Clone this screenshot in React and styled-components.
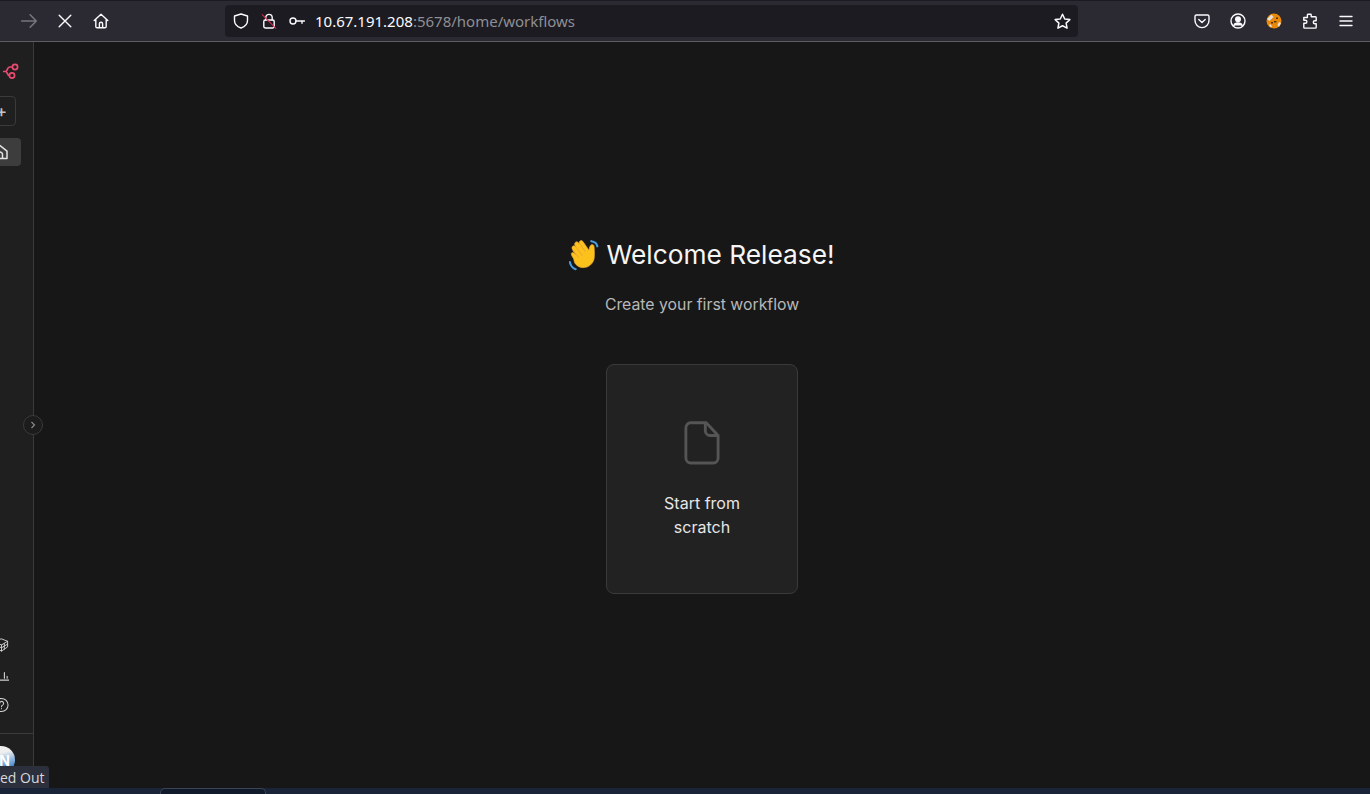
import React from 'react';
import styled, { createGlobalStyle } from 'styled-components';

const GlobalStyle = createGlobalStyle`
  html, body {
    margin: 0;
    padding: 0;
    height: 100%;
    background: #171717;
    overflow: hidden;
    font-family: Inter, "Liberation Sans", sans-serif;
  }
  #root {
    height: 100%;
  }
`;

const Icon = ({ size = 16, color = '#fbfbfe', width = 1.4, vb = 16, children }) => (
  <svg width={size} height={size} viewBox={`0 0 ${vb} ${vb}`} fill="none" stroke={color} strokeWidth={width} strokeLinecap="round" strokeLinejoin="round">
    {children}
  </svg>
);

const App = () => {
  return (
    <Page>
      <GlobalStyle />
      <Toolbar>
        <NavGroup>
          <NavButton>
            <Icon size={18} color="#77767c"><path d="M1.5 8h13M9 2.5 14.5 8 9 13.5" /></Icon>
          </NavButton>
          <NavButton>
            <Icon size={16}><path d="M2.2 2.2l11.6 11.6M13.8 2.2 2.2 13.8" /></Icon>
          </NavButton>
          <NavButton>
            <Icon size={16}><path d="M1.2 7.6 8 1.3l6.8 6.3M2.8 6.4v7a1.3 1.3 0 0 0 1.3 1.3h7.8a1.3 1.3 0 0 0 1.3-1.3v-7M6.4 14.6v-3.8a1.6 1.6 0 0 1 3.2 0v3.8" /></Icon>
          </NavButton>
        </NavGroup>

        <UrlBar>
          <UrlIcons>
            <Icon size={16}><path d="M8 1 14.5 3v4.5c0 3.6-2.6 6.2-6.5 7.5-3.9-1.3-6.5-3.9-6.5-7.5V3z" /></Icon>
            <LockBox>
              <Icon size={16}>
                <path d="M4.8 7V4.6a3.2 3.2 0 0 1 6.4 0V7" />
                <rect x="2.8" y="7" width="10.4" height="8" rx="1.4" />
              </Icon>
              <LockSlash />
            </LockBox>
            <Icon size={16}><circle cx="4" cy="8" r="3" /><path d="M7 8h8.5M13 8v2.2" /></Icon>
          </UrlIcons>
          <UrlText>
            <strong>10.67.191.208</strong>:5678/home/workflows
          </UrlText>
          <StarButton>
            <Icon size={17}><path d="m8 1.2 2.1 4.4 4.8.6-3.5 3.3.9 4.8L8 12l-4.3 2.3.9-4.8L1.1 6.2l4.8-.6z" /></Icon>
          </StarButton>
        </UrlBar>

        <ActionGroup>
          <ActionButton>
            <Icon size={16}><path d="M2.4 2h11.2A1.4 1.4 0 0 1 15 3.4v4.2a7 7 0 0 1-14 0V3.4A1.4 1.4 0 0 1 2.4 2zM4.8 6.4 8 9.4l3.2-3" /></Icon>
          </ActionButton>
          <ActionButton>
            <Icon size={16}>
              <circle cx="8" cy="8" r="7" />
              <circle cx="8" cy="6.2" r="2.3" fill="#fbfbfe" />
              <path d="M3.8 12.6c.6-2 2.2-2.6 4.2-2.6s3.6.6 4.2 2.6" fill="#fbfbfe" />
            </Icon>
          </ActionButton>
          <ActionButton>
            <svg width="16" height="16" viewBox="0 0 16 16">
              <circle cx="8" cy="8" r="7.5" fill="#e8890c" />
              <path d="M1 6 5.500 1.500 7.500 4 3.500 8zM13 14l2-4-2-1-1.500 3zM3 12l2 2.500 1-1.500-2-2z" fill="#e6e1d8" />
              <path d="M5 9h2v1.600H5zM8 8h2.400v1.400H8zM10 4.500h2V6h-2z" fill="#5a3208" />
            </svg>
          </ActionButton>
          <ActionButton>
            <Icon size={16}><path d="M6 1.2h2.6a.6.6 0 0 1 .6.6v1.900h4.200a.8.8 0 0 1 .8.8v3.200h-1.400a1.500 1.500 0 0 0 0 3h1.400v3.600a.8.8 0 0 1-.8.8H2.600a.8.8 0 0 1-.8-.8v-4h1.600a1.500 1.500 0 0 0 0-3H1.800V4.500h3.600V2c0-.4.2-.8.6-.8z" /></Icon>
          </ActionButton>
          <ActionButton>
            <Icon size={16}><path d="M2 3.500h12M2 8h12M2 12.500h12" /></Icon>
          </ActionButton>
        </ActionGroup>
      </Toolbar>

      <Body>
        <Sidebar>
          <SideTop>
            <LogoSlot>
              <svg width="20" height="18" viewBox="0 0 20 18" fill="none" stroke="#ea4b71" strokeWidth="1.700">
                <circle cx="12" cy="4" r="2.600" />
                <circle cx="9" cy="12.500" r="2.600" />
                <path d="M0 8.500h2.500c2.200 0 1.500-4.500 4-4.500h2.900M2.500 8.500c2 0 1.500 4 4 4" />
              </svg>
            </LogoSlot>
            <AddButton>
              <PlusSign>+</PlusSign>
            </AddButton>
            <HomeItem>
              <Icon size={16} color="#e4e4e4" width={1.5}><path d="M1 7.200 8 1.500l7 5.700v7.300H1zM5.500 14.500v-4a2.500 2.500 0 0 1 5 0v4" /></Icon>
            </HomeItem>
          </SideTop>

          <SideBottom>
            <SideLink>
              <Icon size={18} color="#d0d0d0" width={1}><path d="M8 1.500 14.500 4v6L8 14.500 1.500 11V5zM1.500 5 8 8l6.500-4M8 8v6.500M4 6.500v6M11 6.500v6M1.500 8 8 11l6.500-4" /></Icon>
            </SideLink>
            <SideLink>
              <Icon size={18} color="#d0d0d0" width={1.200}><path d="M0 13.500h16M11.100 11.500V5.500M14 11.500V9.500" /></Icon>
            </SideLink>
            <SideLink>
              <Icon size={18} color="#d0d0d0" width={1.100}><circle cx="8" cy="8" r="7" /><path d="M6 6.300a2.100 2.100 0 1 1 3.100 1.800c-.8.400-1.100.9-1.100 1.700M8 11.800v.2" /></Icon>
            </SideLink>
            <UserRow>
              <Avatar>N</Avatar>
            </UserRow>
          </SideBottom>

          <CollapseButton>
            <svg width="6" height="8" viewBox="0 0 6 8" fill="none" stroke="#8d8d8d" strokeWidth="1.100"><path d="m1.500 1 3 3-3 3" /></svg>
          </CollapseButton>
        </Sidebar>

        <Main>
          <Heading>
            <svg width="31" height="31" viewBox="2.500 1.500 24.500 26">
              <path d="M20.500 2.500c2.500.3 4.500 2 5 4.300M2.500 20c.4 2.700 2.200 5 4.800 6" fill="none" stroke="#4a9ce0" strokeWidth="1.800" strokeLinecap="round" />
              <path d="M5.500 17c-1.600-2.300-2.400-4-1.400-4.800 1-.8 2.200.2 3.500 1.800L4.800 9.800c-.9-1.300-.8-2.600.2-3.200 1-.6 2 0 2.900 1.200L6.900 6.300c-.7-1.200-.6-2.400.4-3 1-.6 2.100 0 2.900 1.200l.200.300c-.4-1.100-.1-2.100.8-2.600 1-.5 2 .1 2.700 1.200l4.600 6.800c.4-2 .4-4 2-4.700 1.200-.5 2.200.3 2.300 1.500.3 3 .4 6.500.2 9-.3 4-3 7.400-7 8.400-4 1-7.500-.7-9.500-3.700z" fill="#fcc21b" stroke="#e8a33c" strokeWidth=".5" />
              <path d="M11 4.800l4.500 6.500M8 7.800l5 7M5 10l5 6.500" fill="none" stroke="#e8a33c" strokeWidth=".8" />
            </svg>
            <HeadingText>Welcome Release!</HeadingText>
          </Heading>
          <SubHeading>Create your first workflow</SubHeading>
          <StartCard>
            <svg width="36" height="44" viewBox="0 0 38 44" preserveAspectRatio="none" fill="none" stroke="#555" strokeWidth="3" strokeLinejoin="round">
              <path d="M7 1.800h16.500L36 14.500V37a5 5 0 0 1-5 5H7a5 5 0 0 1-5-5V6.800a5 5 0 0 1 5-5z" />
              <path d="M22.500 2v7.500a5 5 0 0 0 5 5H36" />
            </svg>
            <CardLabel>Start from scratch</CardLabel>
          </StartCard>
        </Main>

        <Tooltip>ed Out</Tooltip>
      </Body>

      <TaskStrip>
        <TaskTab />
      </TaskStrip>
    </Page>
  );
};

export default App;

const Page = styled.div`
  display: flex;
  flex-direction: column;
  height: 794px;
  width: 1370px;
  overflow: hidden;
`;

const Toolbar = styled.header`
  flex: none;
  display: flex;
  align-items: center;
  box-sizing: border-box;
  height: 42px;
  background: #2b2a33;
  border-top: 1px solid #1c1b22;
  border-bottom: 1px solid #5c5c61;
`;

const NavGroup = styled.div`
  display: flex;
  align-items: center;
  margin-left: 11px;
  width: 214px;
`;

const NavButton = styled.div`
  display: flex;
  align-items: center;
  justify-content: center;
  width: 36px;
  height: 32px;
`;

const UrlBar = styled.div`
  display: flex;
  align-items: center;
  box-sizing: border-box;
  width: 853px;
  height: 32px;
  padding: 0 4px 0 8px;
  background: #1c1b22;
  border-radius: 4px;
`;

const UrlIcons = styled.div`
  display: flex;
  align-items: center;
  gap: 12px;
`;

const LockBox = styled.div`
  position: relative;
  width: 16px;
  height: 16px;
`;

const LockSlash = styled.span`
  position: absolute;
  left: -2px;
  top: 8px;
  width: 20px;
  height: 1px;
  background: #e22850;
  transform: rotate(45deg);
`;

const UrlText = styled.div`
  flex: 1;
  margin-left: 10px;
  font-family: "Noto Sans", sans-serif;
  font-size: 15px;
  color: #8f8f93;
  white-space: nowrap;

  strong {
    font-weight: 400;
    color: #fbfbfe;
  }
`;

const StarButton = styled.div`
  display: flex;
  align-items: center;
  justify-content: center;
  width: 24px;
`;

const ActionGroup = styled.div`
  display: flex;
  align-items: center;
  margin-left: 106px;
`;

const ActionButton = styled.div`
  display: flex;
  align-items: center;
  justify-content: center;
  width: 36px;
  height: 32px;
`;

const Body = styled.div`
  position: relative;
  flex: 1;
  display: flex;
  min-height: 0;
  background: #171717;
`;

const Sidebar = styled.aside`
  position: relative;
  flex: none;
  display: flex;
  flex-direction: column;
  justify-content: space-between;
  box-sizing: border-box;
  width: 34px;
  background: #1f1f1f;
  border-right: 1px solid #3a3a3a;
`;

const SideTop = styled.div`
  display: flex;
  flex-direction: column;
  overflow: hidden;
`;

const LogoSlot = styled.div`
  display: flex;
  margin-top: 21px;
  margin-left: 3px;
  height: 17px;
`;

const AddButton = styled.div`
  display: flex;
  align-items: center;
  justify-content: flex-end;
  box-sizing: border-box;
  width: 40px;
  height: 30px;
  margin: 16px 0 0 -24px;
  padding-right: 8px;
  border: 1px solid #3a3a3a;
  border-radius: 4px;
`;

const PlusSign = styled.span`
  font-size: 17px;
  line-height: 1;
  color: #c4c4c4;
  font-weight: 500;
`;

const HomeItem = styled.div`
  display: flex;
  align-items: center;
  justify-content: flex-end;
  width: 45px;
  height: 28px;
  margin: 12px 0 0 -24px;
  padding-right: 13px;
  box-sizing: border-box;
  background: #3d3d3d;
  border-radius: 4px;
`;

const SideBottom = styled.div`
  display: flex;
  flex-direction: column;
  overflow: hidden;
`;

const SideLink = styled.div`
  display: flex;
  justify-content: flex-end;
  align-items: center;
  height: 30px;
  margin-left: -6px;
  padding-right: 24px;
`;

const UserRow = styled.div`
  display: flex;
  justify-content: flex-end;
  box-sizing: border-box;
  height: 55px;
  margin-top: 13px;
  padding: 12px 18px 0 0;
  border-top: 1px solid #3a3a3a;
`;

const Avatar = styled.div`
  flex: none;
  display: flex;
  align-items: center;
  justify-content: flex-end;
  box-sizing: border-box;
  width: 28px;
  height: 28px;
  padding: 0 5px 0 0;
  border-radius: 50%;
  background: linear-gradient(165deg, #efefef 30%, #3b82c9 80%);
  color: #fff;
  font-size: 14px;
  font-weight: 700;
`;

const CollapseButton = styled.div`
  position: absolute;
  top: 373px;
  left: 23px;
  display: flex;
  align-items: center;
  justify-content: center;
  box-sizing: border-box;
  width: 20px;
  height: 20px;
  background: #1c1c1c;
  border: 1px solid #3a3a3a;
  border-radius: 50%;
`;

const Main = styled.main`
  flex: 1;
  display: flex;
  flex-direction: column;
  align-items: center;
  padding-top: 195px;
`;

const Heading = styled.div`
  display: flex;
  align-items: center;
  gap: 6px;
  height: 36px;
`;

const HeadingText = styled.h1`
  margin: 0;
  font-size: 26.300px;
  font-weight: 400;
  line-height: 36px;
  color: #f5f5f5;
`;

const SubHeading = styled.p`
  margin: 22px 0 0;
  font-size: 15.800px;
  line-height: 20px;
  color: #b8b8b8;
`;

const StartCard = styled.button`
  display: flex;
  flex-direction: column;
  align-items: center;
  box-sizing: border-box;
  width: 192px;
  height: 230px;
  margin-top: 49px;
  padding: 56px 50px 0;
  background: #222222;
  border: 1px solid #3a3a3a;
  border-radius: 8px;
  font-family: inherit;
`;

const CardLabel = styled.span`
  margin-top: 26px;
  font-size: 16px;
  line-height: 24px;
  color: #e6e6e6;
  text-align: center;
`;

const Tooltip = styled.div`
  position: absolute;
  left: -4px;
  bottom: 0;
  box-sizing: border-box;
  height: 22px;
  padding: 1px 4px 0 4px;
  background: #2c2f3c;
  border-radius: 3px 3px 0 0;
  font-family: "Open Sans", "Noto Sans", sans-serif;
  font-size: 14px;
  line-height: 22px;
  color: #d8d8d8;
  white-space: nowrap;
`;

const TaskStrip = styled.footer`
  flex: none;
  height: 6px;
  background: #1a2438;
  display: flex;
  align-items: flex-start;
`;

const TaskTab = styled.div`
  box-sizing: border-box;
  width: 106px;
  height: 6px;
  margin-left: 160px;
  background: #111a2a;
  border: 1px solid #3a4358;
  border-bottom: none;
  border-radius: 5px 5px 0 0;
`;
